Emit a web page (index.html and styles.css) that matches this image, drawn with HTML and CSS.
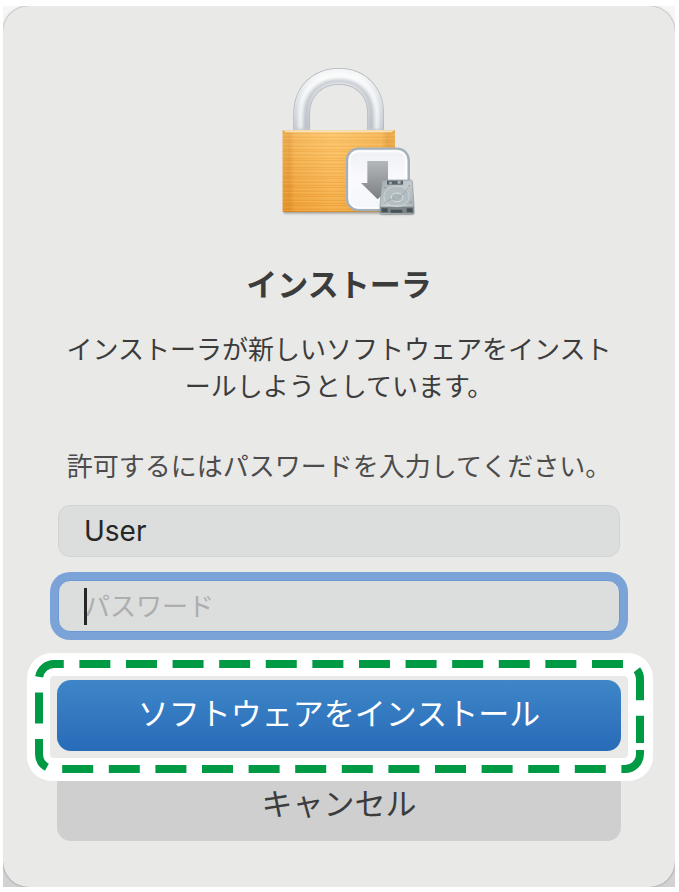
FILE: index.html
```html
<!DOCTYPE html>
<html lang="ja">

<head>
    <meta charset="UTF-8">
    <meta name="viewport" content="width=device-width, initial-scale=1.0">
    <title>インストーラ</title>
    <link rel="stylesheet" href="styles.css">
</head>

<body>
    <div class="backdrop">
        <main class="dialog">
            <svg class="lock-icon" viewBox="-33 0 510 510" aria-hidden="true">
                <defs>
                    <linearGradient id="gold" x1="0" x2="1" y1="0" y2="0">
                        <stop offset="0" stop-color="#e39a35" />
                        <stop offset="0.06" stop-color="#dc9233" />
                        <stop offset="0.11" stop-color="#f3ad4c" />
                        <stop offset="0.45" stop-color="#fcc267" />
                        <stop offset="0.88" stop-color="#f3ac49" />
                        <stop offset="0.93" stop-color="#d98f30" />
                        <stop offset="1" stop-color="#e29a38" />
                    </linearGradient>
                    <linearGradient id="gold-shade" x1="0" x2="0" y1="0" y2="1">
                        <stop offset="0" stop-color="#ffd584" stop-opacity="0.35" />
                        <stop offset="1" stop-color="#e98d18" stop-opacity="0.35" />
                    </linearGradient>
                    <linearGradient id="steel" x1="0" x2="0" y1="0" y2="1">
                        <stop offset="0" stop-color="#f4f5f6" />
                        <stop offset="0.45" stop-color="#dde1e5" />
                        <stop offset="1" stop-color="#c3cad0" />
                    </linearGradient>
                    <linearGradient id="arrow" x1="0" x2="0" y1="0" y2="1">
                        <stop offset="0" stop-color="#b5b8ba" />
                        <stop offset="1" stop-color="#7b7f82" />
                    </linearGradient>
                    <linearGradient id="badge-face" x1="0" x2="0" y1="0" y2="1">
                        <stop offset="0" stop-color="#eef0f3" />
                        <stop offset="0.5" stop-color="#fafafe" />
                        <stop offset="1" stop-color="#f3f6fb" />
                    </linearGradient>
                    <linearGradient id="drive" x1="0" x2="1" y1="0" y2="1">
                        <stop offset="0" stop-color="#a3adb2" />
                        <stop offset="0.5" stop-color="#c3cbce" />
                        <stop offset="1" stop-color="#9ba4a8" />
                    </linearGradient>
                    <pattern id="brushed" width="340" height="27" patternUnits="userSpaceOnUse">
                        <path d="M0 4H340M0 13H340M0 20H340" stroke="#d98518" stroke-width="2" stroke-opacity="0.5" />
                        <path d="M0 8H340M0 24H340" stroke="#ffd58b" stroke-width="2" stroke-opacity="0.45" />
                    </pattern>
                    <filter id="soft" x="-10%" y="-100%" width="120%" height="300%">
                        <feGaussianBlur stdDeviation="3" />
                    </filter>
                    <filter id="sheen" x="-10%" y="-10%" width="120%" height="120%">
                        <feGaussianBlur stdDeviation="4" />
                    </filter>
                </defs>

                <!-- shackle -->
                <path d="M110 228V176C110 110 156 64 222 64S332 110 332 176V228" fill="none" stroke="#aeb4ba" stroke-width="50" />
                <path d="M110 228V176C110 110 156 64 222 64S332 110 332 176V228" fill="none" stroke="url(#steel)" stroke-width="46" />
                <path d="M124 222V176C124 116 164 78 222 78S318 116 318 176V222" fill="none" stroke="#b0b8bf" stroke-width="12" stroke-opacity="0.6" filter="url(#sheen)" />
                <path d="M106 222V176C106 106 154 60 222 60S336 106 336 176V222" fill="none" stroke="#fff" stroke-width="14" stroke-opacity="0.7" filter="url(#sheen)" />

                <!-- body -->
                <rect x="56" y="466" width="330" height="10" fill="#777" opacity="0.6" filter="url(#soft)" />
                <rect x="53" y="225" width="337" height="246" rx="4" fill="url(#gold)" />
                <rect x="53" y="225" width="337" height="246" rx="4" fill="url(#brushed)" />
                <rect x="53" y="225" width="337" height="246" rx="4" fill="url(#gold-shade)" />
                <path d="M55 226H388L380 232H62Z" fill="#f6e3bc" />
                <path d="M54 470H388" stroke="#bb7a27" stroke-width="2" />

                <!-- installer badge -->
                <rect x="246" y="283" width="188" height="186" rx="34" fill="#7d8790" opacity="0.6" />
                <rect x="246" y="281" width="185" height="184" rx="34" fill="url(#badge-face)" stroke="#a5b0ba" stroke-width="7" />
                <rect x="254" y="289" width="169" height="170" rx="26" fill="none" stroke="#fff" stroke-width="5" />
                <path d="M307 318H369V384H389L338 433L288 384H307Z" fill="url(#arrow)" />

                <!-- hard drive -->
                <rect x="346" y="466" width="100" height="12" rx="4" fill="#555" opacity="0.6" filter="url(#soft)" />
                <path d="M351 378Q352 375 356 375H437Q441 375 442 379L447 451V474Q447 478 443 478H349Q345 478 345 474V451Z" fill="url(#drive)" stroke="#8d969a" stroke-width="2" />
                <path d="M346 455H446V475H346Z" fill="#7b8588" />
                <path d="M350 460H368V472H350ZM377 464H412V473H377ZM425 460H443V472H425Z" fill="#485255" />
                <path d="M366 377H414V389H366Z" fill="#596367" />
                <path d="M373 380H380V388H373ZM398 378H407V386H398Z" fill="#abb4b7" />
                <ellipse cx="395" cy="424" rx="38" ry="31" fill="#b4bec2" stroke="#d5dbde" stroke-width="2" />
                <ellipse cx="396" cy="427" rx="17" ry="13" fill="#aab5b9" stroke="#d9dfe1" stroke-width="3" />
                <path d="M356 447Q374 429 389 433M403 425Q421 416 431 396" fill="none" stroke="#929da2" stroke-width="2" />
                <path d="M349 451H443" stroke="#d0d6d9" stroke-width="2" />
                <circle cx="360" cy="398" r="2" fill="#7c868a" />
                <circle cx="433" cy="392" r="2" fill="#7c868a" />
                <circle cx="437" cy="441" r="2" fill="#7c868a" />
            </svg>

            <h1 class="title">インストーラ</h1>
            <p class="message">インストーラが新しいソフトウェアをインストールしようとしています。</p>

            <form class="login">
                <p class="prompt">許可するにはパスワードを入力してください。</p>
                <div class="field">
                    <input type="text" value="User" aria-label="ユーザ名">
                </div>
                <div class="field focused">
                    <input type="password" placeholder="パスワード" aria-label="パスワード">
                </div>
                <div class="install">
                    <button type="submit" class="btn primary">ソフトウェアをインストール</button>
                    <svg class="highlight" viewBox="0 0 626 128" preserveAspectRatio="none" aria-hidden="true">
                        <path class="frame" fill-rule="evenodd" d="M25 0H601A25 25 0 0 1 626 25V103A25 25 0 0 1 601 128H25A25 25 0 0 1 0 103V25A25 25 0 0 1 25 0ZM27 23A4 4 0 0 0 23 27V101A4 4 0 0 0 27 105H597A4 4 0 0 0 601 101V27A4 4 0 0 0 597 23Z" />
                        <path class="dashes" d="M613 97V101A15 15 0 0 1 598 116H27A15 15 0 0 1 12 101V26A15 15 0 0 1 27 11H598A15 15 0 0 1 613 26V90" />
                    </svg>
                </div>
                <button type="button" class="btn">キャンセル</button>
            </form>
        </main>
    </div>
</body>

</html>
```

FILE: styles.css
```css
* {
    margin: 0;
    padding: 0;
    box-sizing: border-box;
}

body {
    padding: 6px 4px 5px 3px;
    background: #fff;
    color: #3c3c3c;
    font-family: "Noto Sans CJK JP", sans-serif;
}

.backdrop {
    background: linear-gradient(#f6f6f6, #d2d2d2);
    overflow: hidden;
}

.dialog {
    display: flex;
    flex-direction: column;
    align-items: center;
    padding: 49px 54px 46px;
    background: #e9e9e8;
    border-radius: 26px;
    box-shadow: 0 0 2px #777;
}

.lock-icon {
    width: 170px;
    height: 170px;
}

.title {
    margin-top: 38px;
    font-size: 31px;
    line-height: 40px;
    font-weight: 700;
}

.message,
.prompt {
    font-size: 26px;
    line-height: 37px;
    text-align: center;
    line-break: loose;
}

.message {
    margin-top: 26px;
}

.login {
    display: flex;
    flex-direction: column;
    width: 100%;
    margin-top: 43px;
}

.prompt {
    margin-bottom: 22px;
    color: #4c4c4c;
}

.field {
    position: relative;
    margin: 0 1px 23px;
}

.field input {
    display: block;
    width: 100%;
    height: 52px;
    padding: 0 25px;
    border: 1px solid #d2d3d3;
    border-radius: 12px;
    outline: none;
    background: #dcdddd;
    color: #262626;
    font-family: Inter, "Noto Sans CJK JP", sans-serif;
    font-size: 28px;
}

.focused input {
    border-color: #6a98d4;
    box-shadow: 0 0 0 8px #7ba3d8;
    font-size: 26px;
}

.focused input::placeholder {
    color: #adadad;
}

/* text cursor */
.focused::after {
    content: "";
    position: absolute;
    top: 8px;
    left: 26px;
    width: 3px;
    height: 37px;
    background: #262626;
}

.install {
    position: relative;
    z-index: 1;
    margin: 25px 0 19px;
}

.btn {
    display: block;
    width: 100%;
    height: 71px;
    padding-bottom: 7px;
    border: none;
    border-radius: 14px;
    background: #cfcfcf;
    color: #3c3c3c;
    font-family: inherit;
    font-size: 31px;
    line-height: 40px;
}

.primary {
    background: linear-gradient(#3e86c8, #286bb8);
    color: #fff;
}

.highlight {
    position: absolute;
    top: -27px;
    left: -30px;
    width: calc(100% + 62px);
    height: 128px;
    pointer-events: none;
}

.frame {
    fill: #fff;
}

.dashes {
    fill: none;
    stroke: #009944;
    stroke-width: 8px;
    stroke-dasharray: 31 15.6;
}
```
